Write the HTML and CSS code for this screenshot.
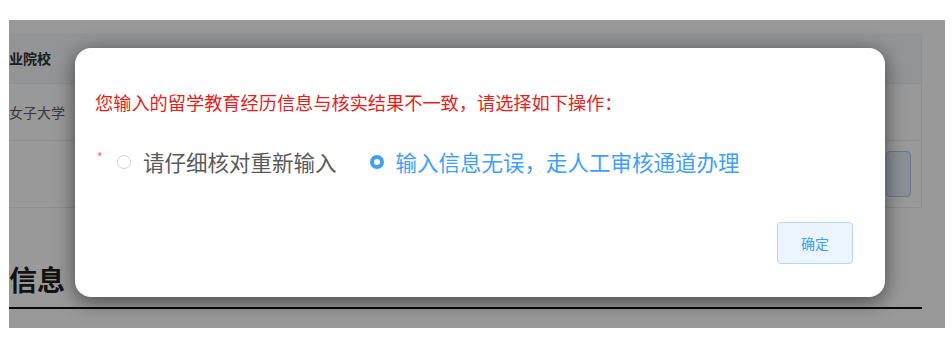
FILE: index.html
```html
<!DOCTYPE html>
<html lang="zh-CN">
<head>
<meta charset="UTF-8">
<title>留学教育经历核实</title>
<link rel="stylesheet" href="styles.css">
</head>
<body>
<div class="frame">
  <div class="page">
    <div class="table">
      <div class="row head"><div class="cell">业院校</div><div class="cell wide"></div><div class="cell last"></div></div>
      <div class="row r2"><div class="cell">女子大学</div><div class="cell wide"></div><div class="cell last"></div></div>
      <div class="row r3"><div class="cell"></div><div class="cell wide"></div><div class="cell last"><span class="op-btn"></span></div></div>
    </div>
    <h2 class="section">信息</h2>
  </div>

  <div class="mask"></div>

  <div class="dialog">
    <p class="warn">您输入的留学教育经历信息与核实结果不一致，请选择如下操作：</p>
    <div class="choice">
      <span class="req">*</span>
      <label class="radio"><span class="dot"></span><span class="label">请仔细核对重新输入</span></label>
      <label class="radio checked"><span class="dot"></span><span class="label">输入信息无误，走人工审核通道办理</span></label>
    </div>
    <div class="footer">
      <button class="btn-ok">确定</button>
    </div>
  </div>
</div>
</body>
</html>
```

FILE: styles.css
```css
body {
	margin: 0;
	background-color: #fff;
	font-family: "Noto Sans CJK SC", "Noto Sans", sans-serif;
}

.frame {
	position: relative;
	margin: 20px 7px 0 9px;
	height: 308px;
	overflow: hidden;
	background-color: #fff;
}

.page {
	width: 913px;
	padding-top: 13px;
}

.table {
	border-right: 1px solid #ebeef5;
}

.row {
	display: flex;
	border-bottom: 1px solid #ebeef5;
}

.row.head {
	height: 50px;
	background-color: #f5f7fa;
	font-weight: bold;
	color: #303133;
}

.row.r2 {
	height: 56px;
	color: #606266;
}

.row.r3 {
	height: 66px;
}

.cell {
	display: flex;
	align-items: center;
	width: 70px;
	font-size: 14px;
}

.cell.wide {
	flex: 1;
}

.cell.last {
	width: 42px;
	border-left: 1px solid #ebeef5;
	justify-content: flex-end;
}

.op-btn {
	display: block;
	width: 23px;
	height: 44px;
	margin-right: 10px;
	border: 1px solid #b3c8e6;
	border-radius: 4px;
	background-color: #e8f0fb;
}

h2.section {
	margin: 51px 0 0 0;
	padding-bottom: 8px;
	font-size: 28px;
	line-height: 40px;
	font-weight: bold;
	color: #1f1f1f;
	border-bottom: 2px solid #111;
}

.mask {
	position: absolute;
	top: 0;
	left: 0;
	right: 0;
	bottom: 0;
	background-color: rgba(0, 0, 0, 0.4);
}

.dialog {
	position: absolute;
	left: 66px;
	top: 28px;
	width: 810px;
	height: 249px;
	box-sizing: border-box;
	padding: 40px 32px 0 20px;
	background-color: #fff;
	border-radius: 16px;
	box-shadow: 0 4px 20px rgba(0, 0, 0, 0.55);
}

.warn {
	margin: 0;
	font-size: 18.2px;
	line-height: 28px;
	color: #e41e1e;
}

.choice {
	display: flex;
	align-items: center;
	margin-top: 26px;
	height: 40px;
}

.req {
	width: 20px;
	margin-left: 2px;
	margin-top: -12px;
	font-size: 12px;
	color: #f56c6c;
}

.radio {
	display: flex;
	align-items: center;
	margin-right: 33px;
}

.dot {
	box-sizing: border-box;
	width: 14px;
	height: 14px;
	border: 1px solid #cfd2d8;
	border-radius: 50%;
	background-color: #fff;
	margin-right: 12px;
}

.label {
	font-size: 21.5px;
	line-height: 30px;
	color: #5a5a5a;
}

.radio.checked .dot {
	border: 4px solid #409eff;
	background-color: #fff;
}

.radio.checked .label {
	color: #409eff;
}

.footer {
	display: flex;
	justify-content: flex-end;
	margin-top: 40px;
}

.btn-ok {
	width: 76px;
	height: 42px;
	border: 1px solid #b3d8ff;
	border-radius: 4px;
	background-color: #ecf5ff;
	color: #409eff;
	font-family: "Noto Sans CJK SC", sans-serif;
	font-size: 14px;
}
```
